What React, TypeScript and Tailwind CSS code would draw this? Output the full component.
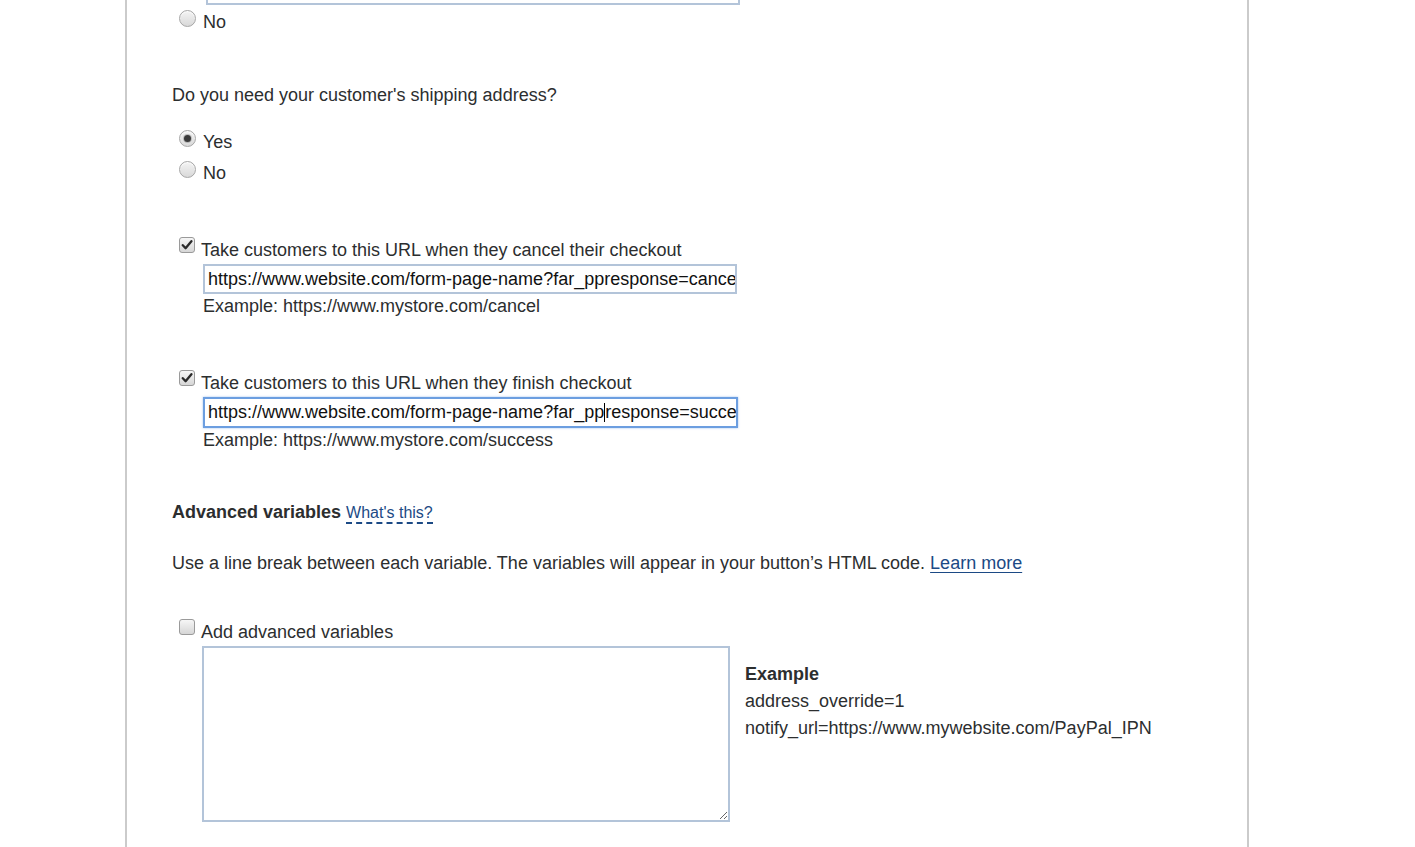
import type { ReactNode } from 'react'

const font = { fontFamily: '"Liberation Sans", Arial, sans-serif' }

function Radio({ checked, label }: { checked?: boolean; label: string }) {
  return (
    <div className="flex items-center h-[31px] pl-[7px]">
      <span className="relative w-[17px] h-[17px] rounded-full border border-[#a6a6a6] bg-gradient-to-b from-[#f4f4f4] to-[#d9d9d9] shadow-[inset_0_1px_1px_rgba(255,255,255,0.9)] flex items-center justify-center -mt-[5px]">
        {checked && <span className="w-[7px] h-[7px] rounded-full bg-[#3a3a3a] shadow-[0_0_0_1px_rgba(120,120,120,0.4)]" />}
      </span>
      <span className="ml-[7px] relative top-[2px]">{label}</span>
    </div>
  )
}

function Checkbox({ checked, label }: { checked?: boolean; label: string }) {
  return (
    <div className="flex items-center h-[31px] pl-[7px]">
      <span className="w-[16px] h-[16px] rounded-[3px] border border-[#9a9a9a] bg-gradient-to-b from-[#f6f6f6] to-[#d6d6d6] flex items-center justify-center -mt-[7px]">
        {checked && (
          <svg width="12" height="12" viewBox="0 0 12 12">
            <path d="M1.8 6.2 L4.6 9.2 L10.4 2.2" fill="none" stroke="#2a2a2a" strokeWidth="2.3" strokeLinecap="round" strokeLinejoin="round" />
          </svg>
        )}
      </span>
      <span className="ml-[6px] relative top-[2px]">{label}</span>
    </div>
  )
}

function FakeInput({ children, focused }: { children: ReactNode; focused?: boolean }) {
  return (
    <div
      className={
        focused
          ? 'ml-[31px] w-[535px] h-[31px] border-2 border-[#6c9ee0] shadow-[0_0_2px_rgba(90,150,230,0.6)] bg-white pl-[3px] flex items-center overflow-hidden whitespace-nowrap text-[#111]'
          : 'ml-[31px] w-[534px] h-[30px] border-2 border-[#b3c4d9] bg-white pl-[3px] flex items-center overflow-hidden whitespace-nowrap text-[#111]'
      }
    >
      {children}
    </div>
  )
}

export default function App() {
  return (
    <div className="min-h-screen bg-white overflow-hidden text-[18px] text-[#2c2e2f]" style={font}>
      <div className="flow-root ml-[125px] w-[1124px] min-h-[847px] border-x-2 border-[#cbcbcb] pl-[45px]">
        {/* tail of the previous field */}
        <div className="-mt-[25px] ml-[34px] w-[534px] h-[30px] border-2 border-[#b3c4d9]" />
        <Radio label="No" />

        <p className="mt-[46px] leading-[27px]">Do you need your customer's shipping address?</p>
        <div className="mt-[16px]">
          <Radio checked label="Yes" />
          <Radio label="No" />
        </div>

        <div className="mt-[46px]">
          <Checkbox checked label="Take customers to this URL when they cancel their checkout" />
          <FakeInput>https://www.website.com/form-page-name?far_ppresponse=cancel</FakeInput>
          <p className="ml-[31px] leading-[24px]">Example: https://www.mystore.com/cancel</p>
        </div>

        <div className="mt-[48px]">
          <Checkbox checked label="Take customers to this URL when they finish checkout" />
          <FakeInput focused>
            <span className="shrink-0">https://www.website.com/form-page-name?far_pp</span>
            <span className="shrink-0 w-px h-[19px] bg-black" />
            <span className="shrink-0">response=success</span>
          </FakeInput>
          <p className="ml-[31px] leading-[24px]">Example: https://www.mystore.com/success</p>
        </div>

        <p className="mt-[47px] leading-[27px]">
          <span className="font-bold">Advanced variables</span>{' '}
          <a className="text-[#1c4a85] border-b-2 border-dashed border-[#1c4a85] text-[16px] pb-[1px]">What's this?</a>
        </p>
        <p className="mt-[24px] leading-[27px]">
          Use a line break between each variable. The variables will appear in your button’s HTML code.{' '}
          <a className="text-[#1c4a85] underline underline-offset-[3px]">Learn more</a>
        </p>

        <div className="mt-[38px]">
          <Checkbox label="Add advanced variables" />
          <div className="flex">
            <textarea
              readOnly
              className="ml-[30px] w-[528px] h-[176px] border-2 border-[#b3c4d9] bg-white outline-none resize"
            />
            <div className="ml-[15px] mt-[15px] leading-[27px]">
              <p className="font-bold">Example</p>
              <p>address_override=1</p>
              <p>notify_url=https://www.mywebsite.com/PayPal_IPN</p>
            </div>
          </div>
        </div>
      </div>
    </div>
  )
}
